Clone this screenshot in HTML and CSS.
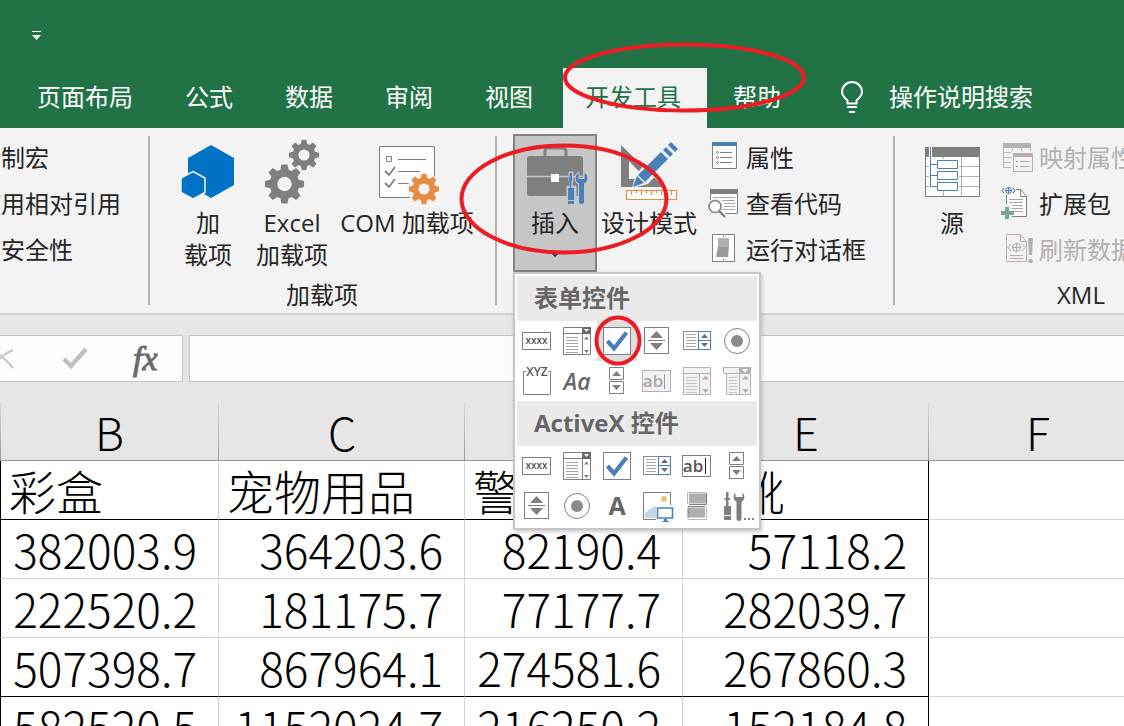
FILE: index.html
```html
<!DOCTYPE html>
<html lang="zh-CN">
<head>
<meta charset="utf-8">
<title>Excel</title>
<link rel="stylesheet" href="styles.css">
</head>
<body>
<svg class="defs" width="0" height="0" aria-hidden="true">
  <symbol id="gear" viewBox="-20 -20 40 40">
    <circle r="11" fill="none" stroke="currentColor" stroke-width="7.6"/>
    <g fill="currentColor">
      <path id="tooth" d="M-4.4-13 -3-19.6H3L4.4-13Z"/>
      <use href="#tooth" transform="rotate(45)"/><use href="#tooth" transform="rotate(90)"/>
      <use href="#tooth" transform="rotate(135)"/><use href="#tooth" transform="rotate(180)"/>
      <use href="#tooth" transform="rotate(225)"/><use href="#tooth" transform="rotate(270)"/>
      <use href="#tooth" transform="rotate(315)"/>
    </g>
  </symbol>
  <symbol id="c-button" viewBox="0 0 40 40">
    <rect x="5.5" y="11.5" width="28" height="17" fill="#fff" stroke="#7f7f7f"/>
    <text x="19.5" y="23" text-anchor="middle" font-size="10" font-weight="600" fill="#555">xxxx</text>
  </symbol>
  <symbol id="c-combo" viewBox="0 0 40 40">
    <path d="M6.500 6.500h27v27h-27zM6.500 12.500h27M25.500 12.500v21" fill="#fff" stroke="#7f7f7f"/>
    <path d="M9 16.500h12M9 19.500h12M9 22.500h12M9 25.500h12M9 28.500h12M9 31.500h12" stroke="#a6a6a6"/>
    <path d="M25 6h9v7h-9z" fill="#6a6a6a"/><path d="M27 8h5l-2.500 3z" fill="#fff"/>
    <path d="M27 18.500l2.500-3 2.500 3zM27 29l2.500 3 2.500-3z" fill="#7f7f7f"/>
  </symbol>
  <symbol id="c-check" viewBox="0 0 40 40">
    <rect x="6.500" y="6.500" width="27" height="27" fill="#fff" stroke="#7f7f7f"/>
    <path d="M10.500 20L17 27.500 29.500 11.500" fill="none" stroke="#4a80ba" stroke-width="4.200"/>
  </symbol>
  <symbol id="c-spin" viewBox="0 0 40 40">
    <rect x="7.500" y="6.500" width="24" height="26" fill="#fff" stroke="#7f7f7f"/>
    <path d="M13 17l6.500-7 6.500 7zM13 22l6.500 7 6.500-7zM11 19h17v1H11z" fill="#7f7f7f"/>
  </symbol>
  <symbol id="c-list" viewBox="0 0 40 40">
    <rect x="6.500" y="10.500" width="27" height="18" fill="#fff" stroke="#8a8a8a"/>
    <path d="M9 13.500h10M9 16.500h10M9 19.500h10M9 22.500h10M9 25.500h10" stroke="#a6a6a6"/>
    <path d="M21.500 10.500h12v18h-12zM21.500 19.500h12" fill="#fff" stroke="#4a80ba"/>
    <path d="M24 17l3.500-4 3.500 4zM24 22h7l-3.500 4z" fill="#6a6a6a"/>
  </symbol>
  <symbol id="c-radio" viewBox="0 0 40 40">
    <circle cx="20" cy="20" r="12.500" fill="#fff" stroke="#7f7f7f"/><circle cx="20" cy="20" r="6" fill="#8a8a8a"/>
  </symbol>
  <symbol id="c-group" viewBox="0 0 40 40">
    <path d="M9 10.500H6.500v23h27v-23H31" fill="none" stroke="#7f7f7f"/>
    <text x="20" y="15" text-anchor="middle" font-size="12" font-weight="600" fill="#555">XYZ</text>
  </symbol>
  <symbol id="c-aa" viewBox="0 0 40 40">
    <text x="20" y="29" text-anchor="middle" font-size="23" font-weight="600" font-style="italic" fill="#666">Aa</text>
  </symbol>
  <symbol id="c-scroll" viewBox="0 0 40 40">
    <path d="M12.500 6.500h14v12h-14zM12.500 20.500h14v12h-14z" fill="#fff" stroke="#7f7f7f"/>
    <path d="M15 15l4.500-5 4.500 5zM15 24h9l-4.500 5z" fill="#7f7f7f"/>
  </symbol>
  <symbol id="c-text" viewBox="0 0 40 40">
    <rect x="5.500" y="9.500" width="28" height="21" fill="#fff" stroke="#7f7f7f"/>
    <text x="16" y="26" text-anchor="middle" font-size="17" font-weight="600" fill="#555">ab</text>
    <path d="M28.500 12v16" stroke="#222"/>
  </symbol>
  <symbol id="c-text-off" viewBox="0 0 40 40">
    <rect x="5.500" y="9.500" width="28" height="21" fill="#f5f0f6" stroke="#b4b0b4"/>
    <text x="16" y="26" text-anchor="middle" font-size="17" font-weight="600" fill="#aaa6aa">ab</text>
    <path d="M27.500 13v15" stroke="#999"/>
  </symbol>
  <symbol id="c-list-off" viewBox="0 0 40 40">
    <path d="M6.500 6.500h27v27h-27zM6.500 12.500h27M22.500 12.500v21" fill="#f5f0f6" stroke="#b4b0b4"/>
    <path d="M9 16.500h11M9 19.500h11M9 22.500h11M9 25.500h11M9 28.500h11M9 31.500h11" stroke="#c8c4c8"/>
    <path d="M25 18.500l3.500-4 3.500 4zM25 28l3.500 4 3.500-4z" fill="#b4b0b4"/>
  </symbol>
  <symbol id="c-combo-off" viewBox="0 0 40 40">
    <path d="M6.500 6.500h27v27h-24v-21h-3zM9.500 12.500h24M22.500 12.500v21" fill="#f5f0f6" stroke="#b4b0b4"/>
    <path d="M12 16.500h8M12 19.500h8M12 22.500h8M12 25.500h8M12 28.500h8M12 31.500h8" stroke="#c8c4c8"/>
    <path d="M22 6h12v7H22z" fill="#b4b0b4"/><path d="M25 8h6l-3 3.500z" fill="#fff"/>
    <path d="M25 18.500l3.500-4 3.500 4zM25 28l3.500 4 3.500-4z" fill="#b4b0b4"/>
  </symbol>
  <symbol id="c-label" viewBox="0 0 40 40">
    <text x="20" y="29" text-anchor="middle" font-size="25" font-weight="700" fill="#666">A</text>
  </symbol>
  <symbol id="c-image" viewBox="0 0 40 40">
    <path d="M33.500 19V6.500h-27v27H19" fill="#fff" stroke="#7f7f7f"/>
    <circle cx="27" cy="13" r="3" fill="#edc27a"/>
    <path d="M8 32v-5l9-7 2 1v11z" fill="#c3d5e9"/>
    <path d="M20.500 22h15v10h-15z" fill="#fff" stroke="#4a80ba" stroke-width="1.600"/>
    <path d="M27 33h3v2h2v1h-7v-1h2z" fill="#4a80ba"/>
  </symbol>
  <symbol id="c-toggle" viewBox="0 0 40 40">
    <path d="M12 7.500h17v10H12zM11 21.500h17v10H11z" fill="#b0b0b0"/>
    <path d="M12 18.500h17.500V7M11 21.500V32M28 20.500H11" fill="none" stroke="#7f7f7f"/>
    <path d="M10.500 18V6.500H29M29.500 21v12.500H11" fill="none" stroke="#b8b8b8"/>
  </symbol>
  <symbol id="c-more" viewBox="0 0 40 40">
    <path d="M9 6h2.500v6H13v2h-1.500v6H14v14H7V20h2V14H7.500v-2H9zM7 29v1h7v-1z" fill="#7f7f7f" fill-rule="evenodd"/>
    <path d="M18.500 6.500a6 6 0 0 0 1 9.500v16.500a2.500 2.500 0 0 0 5 0V16a6 6 0 0 0 1-9.500V11h-7z" fill="#7f7f7f"/>
    <path d="M27 32h2v2h-2zM31 32h2v2h-2zM35 32h2v2h-2z" fill="#7f7f7f"/>
  </symbol>
</svg>

<div class="app">
  <header class="titlebar">
    <button class="qat" aria-label="自定义快速访问工具栏"><svg width="10" height="9" viewBox="0 0 10 9"><path d="M0 0h9v1H0zM0 4h9L4.500 9z" fill="#fff"/></svg></button>
  </header>
  <nav class="tabs">
    <button class="tab">页面布局</button>
    <button class="tab">公式</button>
    <button class="tab">数据</button>
    <button class="tab">审阅</button>
    <button class="tab">视图</button>
    <button class="tab active">开发工具</button>
    <button class="tab">帮助</button>
    <button class="tab search">
      <svg width="24" height="34" viewBox="0 0 24 34"><path d="M7.500 23.500v-3C4 17.500 2 15.500 2 12a10 10 0 0 1 20 0c0 3.500-2 5.500-5.500 8.500v3z" fill="none" stroke="#fff" stroke-width="2"/><path d="M7 26h10v2H7zM9 31h6v2H9z" fill="#fff"/></svg>
      <span>操作说明搜索</span>
    </button>
  </nav>

  <section class="ribbon">
    <div class="group code">
      <div class="stack">
        <button class="small">录制宏</button>
        <button class="small">使用相对引用</button>
        <button class="small">宏安全性</button>
      </div>
    </div>

    <div class="group addins">
      <div class="row">
        <button class="big w84">
          <svg class="pic" width="84" height="73" viewBox="166 134 84 73"><path d="M211 145l23 13v27l-23 13-23-13v-27z" fill="#0072c6"/><path d="M193 171.500l12 6.500v14.500l-12 6.500-12-6.500V178z" fill="#0072c6" stroke="#f3f3f3" stroke-width="1.500"/></svg>
          <span>加<br>载项</span>
        </button>
        <button class="big w84">
          <svg class="pic gray" width="84" height="73" viewBox="250 134 84 73"><use href="#gear" x="264.500" y="164" width="40" height="40"/><use href="#gear" x="288.500" y="139.500" width="31" height="31"/></svg>
          <span>Excel<br>加载项</span>
        </button>
        <button class="big w146">
          <svg class="pic" width="146" height="73" viewBox="334 134 146 73"><path d="M379.500 146.500h55v51h-55z" fill="#fff" stroke="#7f7f7f"/><path d="M386.500 156.500h5v5h-5zM398 159.500h28M398 171.500h22M398 183.500h14" fill="none" stroke="#7f7f7f"/><path d="M385 171l4 4 6-8M385 183l4 4 6-8" fill="none" stroke="#7f7f7f" stroke-width="1.800"/><circle cx="424" cy="189" r="16.500" fill="#f3f3f3"/><use class="orange" href="#gear" x="408.500" y="173.500" width="31" height="31"/></svg>
          <span>COM 加载项</span>
        </button>
      </div>
      <div class="caption">加载项</div>
    </div>

    <div class="group controls">
      <div class="row">
        <div class="menu-host">
          <button class="big insert">
            <svg class="pic" width="80" height="71" viewBox="515 136 80 71"><path d="M545 156v-5a3 3 0 0 1 3-3h15a3 3 0 0 1 3 3v5" fill="none" stroke="#7f7f7f" stroke-width="3"/><rect x="527" y="156" width="56" height="40" rx="3" fill="#7f7f7f"/><path d="M527 176.500h56" stroke="#c6c6c6" stroke-width="1.500"/><path d="M551 174h8v8h-8z" fill="#fff"/><path d="M569 172h4v8l-1 6h4v18h-9v-18h3l-1-6z" fill="#c6c6c6" stroke="#c6c6c6"/><path d="M570 173h2v6l-1 9h3v16h-6v-16h2l-1-9zM568 200h6v1h-6z" fill="#4a80ba" fill-rule="evenodd"/><path d="M578.500 173a6 6 0 0 0 .5 10.500v18a2.500 2.500 0 0 0 5 0v-18a6 6 0 0 0 .5-10.500v6h-6z" fill="#4a80ba" stroke="#c6c6c6" stroke-width="2" paint-order="stroke"/></svg>
            <span>插入</span>
            <svg class="chev" width="8" height="6" viewBox="0 0 8 6"><path d="M1 1l3 3 3-3" fill="none" stroke="#262626" stroke-width="1.500"/></svg>
          </button>
          <div class="popup">
            <h2>表单控件</h2>
            <div class="grid">
              <button aria-label="按钮"><svg><use href="#c-button"/></svg></button>
              <button aria-label="组合框"><svg><use href="#c-combo"/></svg></button>
              <button class="hot" aria-label="复选框"><svg><use href="#c-check"/></svg></button>
              <button aria-label="数值调节钮"><svg><use href="#c-spin"/></svg></button>
              <button aria-label="列表框"><svg><use href="#c-list"/></svg></button>
              <button aria-label="选项按钮"><svg><use href="#c-radio"/></svg></button>
              <button aria-label="分组框"><svg><use href="#c-group"/></svg></button>
              <button aria-label="标签"><svg><use href="#c-aa"/></svg></button>
              <button aria-label="滚动条"><svg><use href="#c-scroll"/></svg></button>
              <button aria-label="文本域" disabled><svg><use href="#c-text-off"/></svg></button>
              <button aria-label="组合列表编辑框" disabled><svg><use href="#c-list-off"/></svg></button>
              <button aria-label="组合下拉编辑框" disabled><svg><use href="#c-combo-off"/></svg></button>
            </div>
            <h2>ActiveX 控件</h2>
            <div class="grid">
              <button aria-label="命令按钮"><svg><use href="#c-button"/></svg></button>
              <button aria-label="组合框"><svg><use href="#c-combo"/></svg></button>
              <button aria-label="复选框"><svg><use href="#c-check"/></svg></button>
              <button aria-label="列表框"><svg><use href="#c-list"/></svg></button>
              <button aria-label="文本框"><svg><use href="#c-text"/></svg></button>
              <button aria-label="滚动条"><svg><use href="#c-scroll"/></svg></button>
              <button aria-label="数值调节钮"><svg><use href="#c-spin"/></svg></button>
              <button aria-label="选项按钮"><svg><use href="#c-radio"/></svg></button>
              <button aria-label="标签"><svg><use href="#c-label"/></svg></button>
              <button aria-label="图像"><svg><use href="#c-image"/></svg></button>
              <button aria-label="切换按钮"><svg><use href="#c-toggle"/></svg></button>
              <button aria-label="其他控件"><svg><use href="#c-more"/></svg></button>
            </div>
          </div>
        </div>
        <button class="big w104">
          <svg class="pic" width="104" height="73" viewBox="597 134 104 73"><path d="M621 145v42h43zM629 161l17 18h-17z" fill="#7f7f7f" fill-rule="evenodd"/><path d="M632 188l4-14L667 141l11 10-30 33z" fill="#f3f3f3"/><path d="M633 187l4-11 24-24 7 7-24 24zM663 150l3-3 7 7-3 3zM668 145l3-3 7 7-3 3z" fill="#4a80ba"/><path d="M637 175l8 8" stroke="#f3f3f3" stroke-width="1.200"/><path d="M626.500 190.500h50v9h-50zM631.500 190v5M636.500 190v3M641.500 190v5M646.500 190v3M651.500 190v5M656.500 190v3M661.500 190v5M666.500 190v3M671.500 190v5" fill="#fff" stroke="#e58e43" stroke-width="1.200"/></svg>
          <span>设计模式</span>
        </button>
        <div class="stack">
          <button class="small"><svg width="30" height="32" viewBox="708 142 30 32"><path d="M712.500 142.500h24v26h-24z" fill="#fff" stroke="#7f7f7f"/><path d="M712 142h25v4h-25z" fill="#4a80ba"/><g fill="none" stroke="#7f7f7f"><path d="M720 152.500h12M720 157.500h12M720 162.500h12"/><circle cx="717.500" cy="152.500" r="1"/><circle cx="717.500" cy="157.500" r="1"/><circle cx="717.500" cy="162.500" r="1"/></g></svg><span>属性</span></button>
          <button class="small"><svg width="30" height="32" viewBox="708 188 30 32"><path d="M710.500 189.500h27v24h-27z" fill="#fff" stroke="#7f7f7f"/><path d="M710 189h28v5h-28z" fill="#7f7f7f"/><path d="M713 197.500h22M722 200.500h13M724 203.500h11M724 206.500h11M722 209.500h13" stroke="#a6a6a6"/><circle cx="715" cy="206.500" r="8" fill="#f3f3f3"/><path d="M720 211l5 6" stroke="#f3f3f3" stroke-width="5"/><circle cx="715" cy="206.500" r="6" fill="#fff" stroke="#7f7f7f" stroke-width="1.600"/><path d="M719 211l6 6" stroke="#7f7f7f" stroke-width="2.400"/></svg><span>查看代码</span></button>
          <button class="small"><svg width="30" height="32" viewBox="708 234 30 32"><path d="M712.500 234.500h22v27h-22z" fill="#fff" stroke="#7f7f7f"/><path d="M718 238h11v9h-11z" fill="#b0b0b0"/><path d="M718 247h11l-1 10h-12z" fill="#9a9a9a"/><path d="M723 236h1v1h-1zM723 259h1v1h-1z" fill="#555"/></svg><span>运行对话框</span></button>
        </div>
      </div>
    </div>

    <div class="group xml">
      <div class="row">
        <button class="big w84">
          <svg class="pic" width="84" height="73" viewBox="910 134 84 73"><path d="M925.500 147.500h54v49h-54z" fill="#fff" stroke="#7f7f7f"/><path d="M926 166.500h53M926 176.500h53M926 186.500h53M943.500 156v40M961.500 156v40" stroke="#b0b0b0"/><path d="M925 147h55v10h-55z" fill="#7f7f7f"/><path d="M929 147h3v10h-3zM929 159h30v32h-30z" fill="#fff"/><path d="M930.500 147v39.500h7M930.500 164.500h7M930.500 175.500h7M937.500 160.500h20v8h-20zM937.500 171.500h20v8h-20zM937.500 182.500h20v8h-20z" fill="none" stroke="#4a80ba"/></svg>
          <span>源</span>
        </button>
        <div class="stack">
          <button class="small" disabled><svg width="32" height="32" viewBox="1001 142 32 32"><path d="M1003.500 143.500h27v24h-27zM1003 152.500h28M1003 157.500h28M1003 162.500h28M1012.500 146v21M1021.500 146v21" fill="#f5f0f6" stroke="#bbb7bb"/><path d="M1003 143h28v5h-28z" fill="#b4b0b4"/><path d="M1011 151h22v22h-22z" fill="#f3f3f3"/><path d="M1013.500 153.500h19v18h-19z" fill="#f5f0f6" stroke="#b4b0b4"/><path d="M1013 153h20v4h-20z" fill="#b4b0b4"/><path d="M1020 161.500h9M1020 166.500h9M1016 161.500h2M1016 166.500h2" stroke="#aaa"/></svg><span>映射属性</span></button>
          <button class="small"><svg width="32" height="34" viewBox="1001 186 32 34"><path d="M1006.500 188.500h14l6 7v20h-20z" fill="#fff" stroke="#7f7f7f"/><path d="M1020.500 188.500v7h6" fill="none" stroke="#7f7f7f"/><path d="M1009 198.500h14M1009 201.500h14M1009 204.500h14M1012 207.500h11M1013 210.500h10" stroke="#a6a6a6"/><path d="M1001 186h15v8h-15zM1001 203h11v14h-11z" fill="#f3f3f3"/><circle cx="1008.500" cy="189.500" r="3" fill="none" stroke="#4a80ba"/><path d="M1005 189.500h7M1008.500 186v7" stroke="#4a80ba"/><path d="M1004 187l-2 2.500 2 2.500M1013 187l2 2.500-2 2.500" fill="none" stroke="#555"/><path d="M1005 206h4v4h5v4h-5v4h-4v-4h-4v-4h4z" fill="#75a892"/></svg><span>扩展包</span></button>
          <button class="small" disabled><svg width="32" height="32" viewBox="1001 234 32 32"><path d="M1006.500 234.500h14l6 7v20h-20z" fill="#f5f0f6" stroke="#b4b0b4"/><path d="M1020.500 234.500v7h6M1010 255.500h13M1010 258.500h13" fill="none" stroke="#b4b0b4"/><circle cx="1016.500" cy="247.500" r="4" fill="none" stroke="#aaa"/><path d="M1012 247.500h9M1016.500 243v9M1011 244l-3 3.500 3 3.500M1022 244l3 3.500-3 3.500" fill="none" stroke="#aaa"/><path d="M1028 238h5l-1 17h-3z" fill="#b4b0b4"/><circle cx="1030.500" cy="261" r="2.300" fill="#b4b0b4"/></svg><span>刷新数据</span></button>
        </div>
      </div>
      <div class="caption">XML</div>
    </div>
  </section>

  <section class="formula">
    <div class="fx-tools">
      <button aria-label="取消"><svg width="28" height="28" viewBox="0 0 28 28"><path d="M4 5c6 4 14 10 20 18M24 5C16 8 9 14 4 23" fill="none" stroke="#c6c6c6" stroke-width="2.200"/></svg></button>
      <button aria-label="输入"><svg width="28" height="28" viewBox="0 0 28 28"><path d="M3 14l7 7L25 4" fill="none" stroke="#bfbfbf" stroke-width="4.500"/></svg></button>
      <button class="fx" aria-label="插入函数">fx</button>
    </div>
    <input class="fx-input" aria-label="编辑栏">
  </section>

  <main class="sheet">
    <table>
      <colgroup><col class="cb"><col class="cw"><col class="cn"><col class="cw"><col class="cn"></colgroup>
      <thead><tr><th>B</th><th>C</th><th>D</th><th>E</th><th>F</th></tr></thead>
      <tbody>
        <tr class="names rule"><td>彩盒</td><td>宠物用品</td><td>警</td><td>鞋靴</td><td></td></tr>
        <tr><td>382003.9</td><td>364203.6</td><td>82190.4</td><td>57118.2</td><td></td></tr>
        <tr><td>222520.2</td><td>181175.7</td><td>77177.7</td><td>282039.7</td><td></td></tr>
        <tr class="rule"><td>507398.7</td><td>867964.1</td><td>274581.6</td><td>267860.3</td><td></td></tr>
        <tr><td>582520.5</td><td>1152024.7</td><td>216250.2</td><td>152184.8</td><td></td></tr>
      </tbody>
    </table>
  </main>

  <svg class="ink under" width="820" height="270" viewBox="0 0 820 270"><g fill="none" stroke="#ed1c24" stroke-width="4"><ellipse cx="684.500" cy="77.500" rx="119.500" ry="33"/><ellipse cx="564" cy="199" rx="102.500" ry="53.500"/></g></svg>
  <svg class="ink over" width="820" height="400" viewBox="0 0 820 400"><ellipse cx="618" cy="340.500" rx="21.500" ry="23" fill="none" stroke="#ed1c24" stroke-width="4"/></svg>
</div>
</body>
</html>
```
FILE: styles.css
```css
* { box-sizing: border-box; }
body { margin: 0; background: #fff; color: #262626; font: 24px/32px "Open Sans", "Noto Sans CJK SC", sans-serif; }
button { margin: 0; padding: 0; border: 0; background: none; color: inherit; font: inherit; white-space: nowrap; }
svg { display: block; flex: none; }
.defs { display: none; }
.app { position: relative; height: 100vh; overflow: hidden; display: flex; flex-direction: column; }
.app > * { flex: none; }

.titlebar { height: 68px; padding: 31px 32px; background: #217346; }
.qat { display: block; }
.tabs { display: flex; gap: 4px; height: 60px; padding-left: 15px; background: #217346; color: #fff; }
.tab { padding: 0 26px 2px 22px; }
.tab.active { background: #f3f3f3; color: #217346; }
.tab.search { display: flex; align-items: center; gap: 25px; padding-left: 29px; }

.ribbon { display: flex; height: 187px; background: #f3f3f3; border-bottom: 2px solid #d2d2d2; }
.group { position: relative; flex: none; display: flex; flex-direction: column; justify-content: space-between; padding: 6px 0 2px; }
.group + .group::before { content: ""; position: absolute; left: -2px; top: 8px; width: 2px; height: 169px; background: #b1b1b1; }
.row { display: flex; align-items: flex-start; }
.code { width: 150px; }
.code .stack { margin-left: -23px; }
.addins { width: 347px; padding-left: 16px; }
.controls { width: 398px; padding-left: 16px; }
.xml { width: 372px; padding-left: 15px; }
.caption { text-align: center; }
.addins .caption { padding-right: 19px; }
.xml .caption { padding-right: 15px; }
.big { display: flex; flex-direction: column; align-items: center; text-align: center; }
.w84 { width: 84px; }
.w104 { width: 104px; }
.w146 { width: 146px; }
.gray { color: #7f7f7f; }
.orange { color: #e58e43; }
.insert { width: 84px; height: 138px; border: 2px solid #848484; background: #c6c6c6; }
.chev { margin-top: 13px; }
.stack { display: flex; flex-direction: column; gap: 14px; padding-top: 8px; }
.controls .stack { padding-left: 7px; }
.xml .stack { padding-left: 7px; }
.small { display: flex; align-items: center; gap: 8px; height: 32px; text-align: left; }
.xml .small { gap: 6px; }
.small:disabled { color: #b1b1b1; }

.menu-host { position: relative; }
.popup { position: absolute; z-index: 3; left: 0; top: 138px; width: 248px; padding: 2px; border: 2px solid #c6c6c6; background: #fff; box-shadow: 1px 2px 4px rgba(0, 0, 0, .2); }
.popup h2 { margin: 0; padding: 0 17px 2px; height: 45px; background: #eaeaea; color: #666; font-size: 24px; line-height: 43px; font-weight: 700; }
.grid { display: grid; grid-template-columns: repeat(6, 40px); }
.grid svg { width: 40px; height: 40px; }
.grid .hot { background: #e1dfdd; }

.formula { display: flex; gap: 6px; height: 87px; padding: 20px 0; background: #e6e6e6; }
.fx-tools { display: flex; align-items: center; width: 183px; border: 1px solid #c6c6c6; border-left: 0; background: #fdfdfd; }
.fx-tools button:first-child { margin-left: -11px; }
.fx-tools button + button { margin-left: 44px; }
.fx-tools .fx { color: #6a6a6a; font: italic 34px/40px "Liberation Serif", serif; -webkit-text-stroke: 1px #6a6a6a; }
.fx-input { flex: 1; border: 1px solid #c6c6c6; border-right: 0; background: #fdfdfd; font: inherit; }

table { width: 1147px; table-layout: fixed; border-collapse: separate; border-spacing: 0; color: #000; font: 300 46px/58px "Noto Sans CJK SC", sans-serif; }
.cb { width: 219px; }
.cw { width: 246px; }
.cn { width: 218px; }
th, td { height: 59px; padding: 0; white-space: nowrap; }
th { font-weight: 300; font-size: 45px; background: linear-gradient(#d8d8d8, #999) right / 1px 100% no-repeat #e6e6e6; border-bottom: 1px solid #999; padding-top: 2px; line-height: 52px; }
th:first-child { background: linear-gradient(#d8d8d8, #999) right / 1px 100% no-repeat, linear-gradient(#d8d8d8, #999) left / 1px 100% no-repeat #e6e6e6; }
td { border-right: 1px solid #d4d4d4; border-bottom: 1px solid #d4d4d4; text-align: right; padding-right: 21px; }
td:first-child { border-left: 1px solid #000; }
td:nth-child(4) { border-right-color: #000; }
.rule td:nth-child(-n+4) { border-bottom-color: #000; }
.names td { padding: 0 0 0 8px; text-align: left; font-size: 47px; }

.ink { position: absolute; left: 0; top: 0; pointer-events: none; }
.under { z-index: 2; }
.over { z-index: 4; }
```
